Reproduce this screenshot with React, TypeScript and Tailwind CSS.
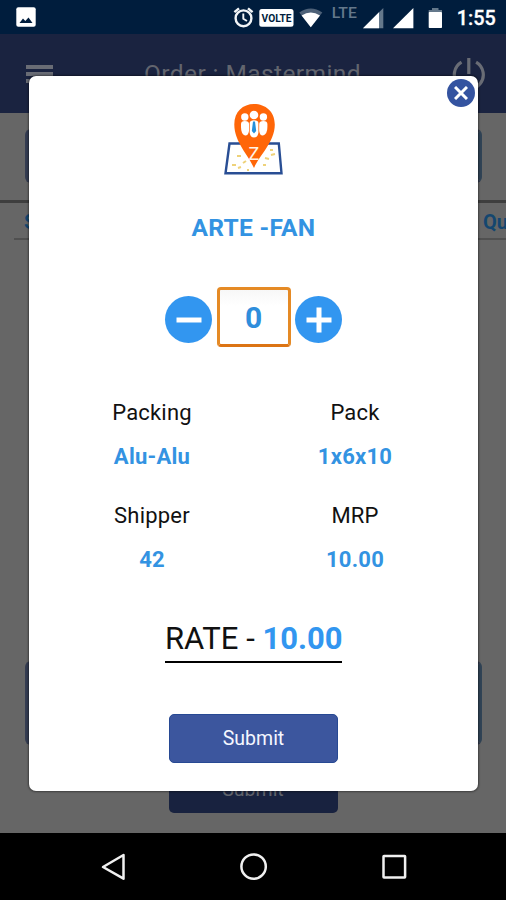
import type { ReactNode } from "react";

function StatusBar() {
  return (
    <div className="h-[34px] bg-[#001d3d] flex items-start shrink-0">
      <svg className="ml-4 mt-[7px]" width="20" height="20" viewBox="0 0 20 20">
        <rect x="0.3" y="0.3" width="19.4" height="19.4" rx="2" fill="#fff" />
        <path d="M3.5 16 L7 11.5 L9.3 14 L12.5 10.5 L16.5 16 Z" fill="#001d3d" />
      </svg>
      <svg className="ml-auto" width="286" height="34" viewBox="220 0 286 34" fill="none">
        <circle cx="243.5" cy="18.3" r="7.9" stroke="#f2f5f7" strokeWidth="2.4" />
        <path d="M234.4 12.2 L239 8.3 M252.6 12.2 L248 8.3" stroke="#f2f5f7" strokeWidth="2.4" />
        <path d="M243.3 13.5 V18.8 L247 21" stroke="#f2f5f7" strokeWidth="1.9" />
        <rect x="259.3" y="9" width="34.2" height="17.7" rx="2.5" fill="#fff" />
        <text x="276.6" y="21.6" textAnchor="middle" textLength="30" lengthAdjust="spacingAndGlyphs" fontFamily="Roboto, sans-serif" fontSize="11" fontWeight="700" fill="#001d3d">VOLTE</text>
        <path d="M299.3 12.6 Q310.8 4.4 322.3 12.6 L310.8 27.3 Z" fill="#4d6178" />
        <path d="M301.6 15.6 Q310.8 9.4 320 15.6 L310.8 27.3 Z" fill="#fff" />
        <text x="331.8" y="18.2" textLength="25" lengthAdjust="spacingAndGlyphs" fontFamily="Roboto, sans-serif" fontSize="14.5" fontWeight="500" fill="#64788b">LTE</text>
        <path d="M363 28.2 L383.3 8 V28.2 Z" fill="#64788b" />
        <path d="M363 28.2 L379 12.3 V28.2 Z" fill="#fff" />
        <path d="M393 28.2 L413.4 8 V28.2 Z" fill="#fff" />
        <path d="M428.7 12.5 V10 H432 V8 H438.5 V10 H442 V12.5 Z" fill="#64788b" />
        <rect x="428.7" y="12" width="13.3" height="16" rx="0.8" fill="#fff" />
        <text x="456.7" y="25" textLength="39" lengthAdjust="spacingAndGlyphs" fontFamily="Roboto, sans-serif" fontSize="19.5" fontWeight="500" fill="#fff" stroke="#fff" strokeWidth="0.3">1:55</text>
      </svg>
    </div>
  );
}

function AppBar() {
  return (
    <div className="h-[79px] bg-[#1a2340] flex items-center justify-between pl-[26px] pr-5 shrink-0">
      <div className="w-[27px] flex flex-col gap-[3px]">
        <div className="h-1 bg-[#696c75]"></div>
        <div className="h-1 bg-[#696c75]"></div>
        <div className="h-1 bg-[#696c75]"></div>
      </div>
      <h1 className="text-[24.5px] leading-7 tracking-[0.4px] text-[#62656e]">Order : Mastermind</h1>
      <svg width="34" height="34" viewBox="0 0 34 34" fill="none" stroke="#696c75" strokeWidth="3.2">
        <path d="M16.8 1 V17" />
        <path d="M9.5 5.2 A14.5 14.5 0 1 0 24.1 5.2" />
      </svg>
    </div>
  );
}

function OrderPage() {
  return (
    <div className="h-[720px] bg-[#666666] flex flex-col shrink-0 overflow-hidden">
      <div className="mt-4 ml-[25px] mr-6 h-[54px] border-4 border-[#343c51] border-r-[#304355] rounded-md"></div>
      <div className="mt-[17px] h-[3px] bg-[#3e3e3e] shrink-0"></div>
      <div className="ml-[14px] h-[37px] pl-[10px] pt-1 border-b-2 border-[#505050] flex justify-between text-xl leading-[31px] font-bold text-[#14466f] shrink-0">
        <span>S.No</span>
        <span className="w-[23px]">Qu</span>
      </div>
      <div className="mt-[421px] ml-[25px] mr-6 h-[84px] border-4 border-[#343c51] border-r-[#304355] rounded-md shrink-0"></div>
      <button className="mt-5 mx-auto w-[169px] h-[48px] bg-[#18223f] rounded-[5px] pt-0.5 text-[19.5px] text-[#60636b] shrink-0">Submit</button>
    </div>
  );
}

function NavBar() {
  return (
    <div className="h-[67px] bg-black flex items-center pl-[101px] shrink-0">
      <svg width="306" height="30" viewBox="101 852 306 30" fill="none" stroke="#f0f0f0" strokeWidth="2.5" strokeLinejoin="round">
        <path d="M103 867 L123.5 855 V878.7 Z" />
        <circle cx="253.6" cy="866.6" r="12.2" />
        <rect x="383.5" y="856" width="21.6" height="21.6" rx="0.5" />
      </svg>
    </div>
  );
}

function Logo() {
  return (
    <svg className="mx-auto shrink-0" width="60" height="73" viewBox="224 103 60 73">
      <path d="M229.5 143.5 H278.8 L281.5 173.3 H225.5 Z" fill="#fff" stroke="#294e94" strokeWidth="2.4" />
      <path d="M237 156h4 M243 163l3-2 M232 165h4 M238 168l3-1 M265 158l4 1 M270 150h3 M271 155l4-1 M263 165h3 M247 170h2" stroke="#eed27a" strokeWidth="2" />
      <path d="M254 168 C249 156 234.3 142 234.3 124.5 C234.3 111.5 243 104 254 104 C265.5 104 274.8 111.5 274.8 124.5 C274.8 142 259 156 254 168 Z" fill="#ff6608" />
      <g fill="#fff">
        <circle cx="244.8" cy="117" r="3.7" />
        <circle cx="263.4" cy="117" r="3.7" />
        <circle cx="254" cy="115" r="4.3" />
        <path d="M241 124 Q241 121 244.8 121 Q249 121 249 124 V131 Q248 136 245 135.5 Q241 134 241 127 Z" />
        <path d="M267.4 124 Q267.4 121 263.4 121 Q259.2 121 259.2 124 V131 Q260 136 263 135.5 Q267.4 134 267.4 127 Z" />
        <path d="M249.7 123 Q250 120.2 254 120.2 Q258.2 120.2 258.4 123 V133 Q257.5 137.5 254 137.5 Q250.5 137.5 249.7 133 Z" />
      </g>
      <path d="M253 121.5 H255 L256.2 131 L254 133.5 L251.8 131 Z" fill="#258fda" />
      <text x="254" y="159.5" textAnchor="middle" fontFamily="Roboto, sans-serif" fontSize="18" fontWeight="400" fill="#fff4e9">Z</text>
    </svg>
  );
}

function RoundButton({ label, children }: { label: string; children: ReactNode }) {
  return (
    <button aria-label={label} className="size-[47px] rounded-full bg-[#3296f0] flex items-center justify-center">
      <svg width="26" height="26" viewBox="0 0 26 26" stroke="#fff" strokeWidth="5">
        {children}
      </svg>
    </button>
  );
}

function Detail({ name, value }: { name: string; value: string }) {
  return (
    <div className="h-[103px] text-center">
      <p className="text-[22px] leading-[31px] tracking-[0.2px] text-[#111]">{name}</p>
      <p className="mt-[14px] text-[22px] leading-[30px] tracking-[0.25px] font-bold text-[#3393e2]">{value}</p>
    </div>
  );
}

function OrderModal() {
  return (
    <div className="absolute left-[29px] top-[76px] w-[449px] h-[715px] bg-white rounded-[7px] shadow-[0_0_2px_1px_rgba(0,0,0,0.4)] pt-[27px] flex flex-col">
      <button aria-label="Close" className="absolute right-[3px] top-[3px] size-[28px] rounded-full bg-[#3453a0] flex items-center justify-center">
        <svg width="14" height="14" viewBox="0 0 14 14" stroke="#fff" strokeWidth="3">
          <path d="M1 1 L13 13 M13 1 L1 13" />
        </svg>
      </button>
      <Logo />
      <h2 className="mt-[37px] text-center text-[24.5px] leading-[30px] tracking-[0.3px] font-bold text-[#3393e2]">ARTE -FAN</h2>
      <div className="mt-11 h-[60px] flex justify-center items-center gap-[4.5px]">
        <div className="pt-[5px]">
          <RoundButton label="Decrease"><path d="M0.5 13 H25.5" /></RoundButton>
        </div>
        <div className="w-[74px] h-[60px] rounded-[4px] border-[3px] border-[#e58a25] border-b-[#dc7414] bg-linear-to-b from-[#f7f7f7] to-white to-30% text-center text-[30px] leading-[56px] font-bold text-[#2f8edc]">0</div>
        <div className="pt-[5px]">
          <RoundButton label="Increase"><path d="M0.5 13 H25.5 M13 0.5 V25.5" /></RoundButton>
        </div>
      </div>
      <div className="mt-[50px] mx-[21.5px] grid grid-cols-2">
        <Detail name="Packing" value="Alu-Alu" />
        <Detail name="Pack" value="1x6x10" />
        <Detail name="Shipper" value="42" />
        <Detail name="MRP" value="10.00" />
      </div>
      <p className="mt-[16px] mx-auto w-[177px] h-[44px] border-b-2 border-black text-center whitespace-nowrap text-[31px] leading-[40px] text-[#111]">
        RATE - <span className="font-bold text-[#3296f0]">10.00</span>
      </p>
      <button className="mt-[51px] mx-auto w-[169px] h-[49px] shrink-0 rounded-[5px] border border-[#274993] bg-[#3c569e] text-[19.5px] text-[#f4f7ff]">Submit</button>
    </div>
  );
}

export default function App() {
  return (
    <div className="relative w-[506px] h-[900px] overflow-hidden flex flex-col font-['Roboto',sans-serif]">
      <StatusBar />
      <AppBar />
      <OrderPage />
      <NavBar />
      <OrderModal />
    </div>
  );
}
